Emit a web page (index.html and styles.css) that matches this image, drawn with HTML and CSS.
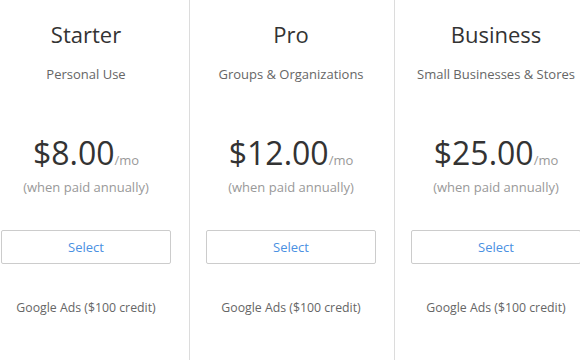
FILE: index.html
```html
<!DOCTYPE html>
<html lang="en">
<head>
  <meta charset="utf-8"/>
  <meta name="viewport" content="width=device-width, initial-scale=1"/>
  <title>Plans</title>
  <link rel="stylesheet" href="styles.css">
</head>
<body>
  <div class="plans">

    <div class="plan">
      <h2 class="plan-name">Starter</h2>
      <p class="plan-use">Personal Use</p>
      <div class="price"><span class="amount">$8.00</span><span class="per">/mo</span></div>
      <p class="billing">(when paid annually)</p>
      <button class="btn-select">Select</button>
      <ul class="features">
        <li>Google Ads ($100 credit)</li>
      </ul>
    </div>

    <div class="plan">
      <h2 class="plan-name">Pro</h2>
      <p class="plan-use">Groups &amp; Organizations</p>
      <div class="price"><span class="amount">$12.00</span><span class="per">/mo</span></div>
      <p class="billing">(when paid annually)</p>
      <button class="btn-select">Select</button>
      <ul class="features">
        <li>Google Ads ($100 credit)</li>
      </ul>
    </div>

    <div class="plan">
      <h2 class="plan-name">Business</h2>
      <p class="plan-use">Small Businesses &amp; Stores</p>
      <div class="price"><span class="amount">$25.00</span><span class="per">/mo</span></div>
      <p class="billing">(when paid annually)</p>
      <button class="btn-select">Select</button>
      <ul class="features">
        <li>Google Ads ($100 credit)</li>
      </ul>
    </div>

  </div>
</body>
</html>
```

FILE: styles.css
```css
body {
  font-family: "Open Sans", "Liberation Sans", sans-serif;
  background-color: #fff;
  margin: 0;
  overflow: hidden;
}

.plans {
  display: flex;
  margin-left: -15px;
  height: 360px;
}

.plan {
  flex: 0 0 205px;
  border-right: 1px solid #dcdcdc;
  padding: 0 18px 0 16px;
  box-sizing: border-box;
  text-align: center;
  display: flex;
  flex-direction: column;
  align-items: stretch;
}

.plan-name {
  font-size: 22px;
  font-weight: 400;
  color: #333;
  line-height: 30px;
  margin: 19px 0 0;
}

.plan-use {
  font-size: 13px;
  color: #666;
  line-height: 18px;
  margin: 16px 0 0;
  white-space: nowrap;
}

.price {
  margin-top: 50px;
  line-height: 40px;
  color: #333;
}

.amount {
  font-size: 32px;
}

.per {
  font-size: 13px;
  color: #999;
}

.billing {
  font-size: 13px;
  color: #999;
  line-height: 18px;
  margin: -2px 0 0;
}

.btn-select {
  margin-top: 34px;
  height: 34px;
  background-color: #fff;
  border: 1px solid #ccc;
  border-radius: 2px;
  color: #4a90e2;
  font-family: inherit;
  font-size: 13px;
  cursor: pointer;
}

.features {
  list-style: none;
  margin: 35px 0 0;
  padding: 0;
  font-size: 12.3px;
  line-height: 18px;
  color: #666;
}
```
